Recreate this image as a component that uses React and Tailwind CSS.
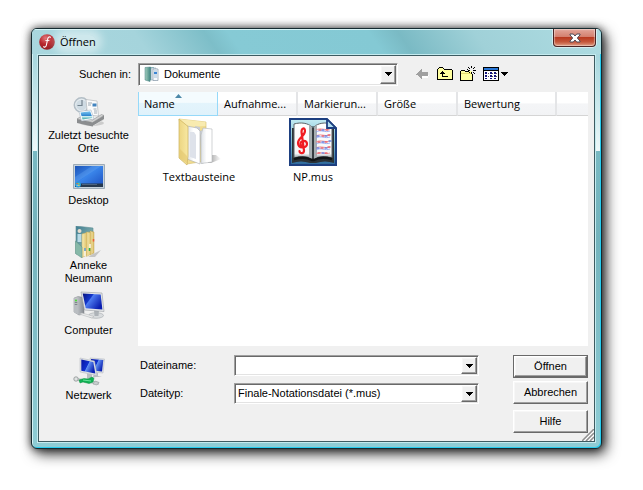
import { useState } from "react";

const SUNKEN =
  "border border-t-[#a0a0a0] border-l-[#a0a0a0] border-r-white border-b-white shadow-[inset_1px_1px_#696969,inset_-1px_-1px_#e3e3e3] bg-white";
const RAISED =
  "border border-t-white border-l-white border-r-[#696969] border-b-[#696969] shadow-[inset_-1px_-1px_#a0a0a0,inset_1px_1px_#f7f7f7] bg-[#f0f0f0]";

const FinaleLogo = () => (
  <svg viewBox="0 0 16 16" className="h-4 w-4">
    <defs>
      <radialGradient id="logo" cx="0.4" cy="0.25" r="0.8">
        <stop offset="0" stopColor="#e0767a" />
        <stop offset="0.5" stopColor="#b8262c" />
        <stop offset="1" stopColor="#8d1c21" />
      </radialGradient>
    </defs>
    <circle cx="8" cy="8" r="7.8" fill="url(#logo)" />
    <path d="M11.500 3.200C10 2.200 9 3.300 8.600 5.400L7.400 11c-.4 1.900-1.400 2.600-2.700 1.700" fill="none" stroke="#fff" strokeWidth="1.100" strokeLinecap="round" />
    <path d="M6.400 6.500h4" stroke="#fff" strokeWidth=".9" />
  </svg>
);

const DocsIcon = () => (
  <svg viewBox="0 0 16 16" className="h-4 w-4">
    <defs>
      <linearGradient id="docs" x1="0" x2="1">
        <stop offset="0" stopColor="#a5cfbf" />
        <stop offset="1" stopColor="#3f8580" />
      </linearGradient>
    </defs>
    <path d="M5 1h5v13H5z" fill="#8fb9bd" />
    <path d="M7 2h5v12H7z" fill="#dfe9f1" stroke="#8ca2b4" strokeWidth=".6" />
    <path d="M9 3h5v11.500H9z" fill="#f6fafd" stroke="#8798a8" strokeWidth=".7" />
    <path d="M10 5h3M10 9h3M10 11h3" stroke="#8eaccb" strokeWidth=".8" />
    <path d="M10 6h3v2h-3z" fill="#3d86d4" />
    <path d="M1 1.500 6.500 1v12l-.5 2.500L1 14z" fill="url(#docs)" stroke="#467f80" strokeWidth=".5" />
  </svg>
);

const RecentIcon = () => (
  <svg viewBox="0 0 32 32" className="h-8 w-8">
    <defs>
      <linearGradient id="recentPic" x1="0" y1="0" x2="0" y2="1">
        <stop offset="0" stopColor="#7cc8f2" />
        <stop offset=".55" stopColor="#2b83cf" />
        <stop offset=".6" stopColor="#d8f3f4" />
        <stop offset="1" stopColor="#2e9ea2" />
      </linearGradient>
    </defs>
    <ellipse cx="19" cy="27" rx="12" ry="3" fill="#000" opacity=".15" />
    <circle cx="8.500" cy="9" r="7.200" fill="#e4ebef" stroke="#b3bec6" strokeWidth="1.500" />
    <circle cx="8.500" cy="9" r="5.300" fill="#cfdbe3" />
    <path d="M9 4v5.500H4.500" fill="none" stroke="#74838e" strokeWidth="1.200" />
    <path d="M13 3.500 24 5l1.500 15-11-1z" fill="#fbfbfb" stroke="#b3b8bc" strokeWidth=".7" />
    <path d="M15 7h4M15 9h3M20.500 13h3M21 15h3M21 17h3" stroke="#93a0ab" strokeWidth=".9" />
    <path d="M19.500 7.500h4v3h-4z" fill="#4284bf" />
    <path d="m4 23 15.500 3.500L31 19.500v4L19.500 30.500 4 27z" fill="#8b8d8f" />
    <path d="m4 23 3-2 12.500 3 9-5.500 2.500 1-11.500 7z" fill="#d2d3d3" stroke="#7c7e80" strokeWidth=".5" />
    <path d="M6 15.500 18 14l3 9-12.500 2z" fill="#fff" stroke="#9ab" strokeWidth=".5" />
    <path d="m7.500 16.500 9.700-1.200 2.300 6.700-10 1.500z" fill="url(#recentPic)" />
    <path d="m20 30 11-6.500" stroke="#e8e8e8" strokeWidth=".8" />
  </svg>
);

const DesktopIcon = () => (
  <svg viewBox="0 0 32 32" className="h-8 w-8">
    <defs>
      <linearGradient id="desk" x1="0" y1="0" x2="1" y2="1">
        <stop offset="0" stopColor="#1b52b6" />
        <stop offset=".45" stopColor="#3a85ea" />
        <stop offset="1" stopColor="#1c4fc0" />
      </linearGradient>
    </defs>
    <path d="M.5 3.500h31v24H.5z" fill="#c6d2dc" stroke="#9dabb7" />
    <path d="M2 5h28v21H2z" fill="url(#desk)" />
    <path d="M2 16 19 5h9L2 22z" fill="#7ab7f8" opacity=".25" />
    <path d="M2 22.500h28V26H2z" fill="#27394f" />
    <path d="M9 23.500h15" stroke="#576f89" strokeWidth=".8" />
    <circle cx="5" cy="23.500" r="3" fill="#2a9bd8" />
    <path d="M3.500 22h1.300v1.300H3.500z" fill="#f46b37" />
    <path d="M5.200 22h1.300v1.300H5.200z" fill="#8bd05a" />
    <path d="M3.500 23.800h1.300v1.200H3.500z" fill="#73d1ff" />
    <path d="M5.200 23.800h1.300v1.200H5.200z" fill="#ffd348" />
  </svg>
);

const UserFolderIcon = () => (
  <svg viewBox="0 0 32 32" className="h-8 w-8">
    <defs>
      <linearGradient id="userBack" x1="0" y1="0" x2="1" y2="1">
        <stop offset="0" stopColor="#3f7d93" />
        <stop offset="1" stopColor="#a3c8bb" />
      </linearGradient>
      <linearGradient id="userYellow" x1="0" x2="1">
        <stop offset="0" stopColor="#f8ecb4" />
        <stop offset="1" stopColor="#dcc069" />
      </linearGradient>
    </defs>
    <path d="m20 28 8-4-6 7h-7z" fill="#000" opacity=".18" />
    <path d="m3 0 17 2v25L3 28z" fill="url(#userBack)" stroke="#5d8d95" strokeWidth=".6" />
    <circle cx="6.500" cy="5" r="2" fill="#e7ddcf" />
    <path d="M4.500 8h4v8h-4z" fill="#b9dbe7" />
    <path d="m17 5 4 1v21l-4 2z" fill="url(#userYellow)" stroke="#b3923d" strokeWidth=".4" />
    <path d="m13.500 6 4.500.5V28l-4.500 2.500z" fill="url(#userYellow)" stroke="#c6aa58" strokeWidth=".5" />
    <path d="m9 8 5-1.500V29l-5 2.500z" fill="url(#userYellow)" stroke="#c6aa58" strokeWidth=".5" />
    <path d="m2.500 15 6.500 6v11l-6.500-4.500z" fill="#86b8a8" stroke="#5c9083" strokeWidth=".5" />
    <path d="M12 25v5M17 18v4" stroke="#fff" strokeWidth="1.300" />
    <path d="M16.500 22v3" stroke="#32b447" strokeWidth="1.500" />
    <path d="M12 22v3" stroke="#4f91dc" strokeWidth="1.300" />
    <path d="M20.500 13v2.500" stroke="#ee5b39" strokeWidth="1.500" />
  </svg>
);

const ComputerIcon = () => (
  <svg viewBox="0 0 32 32" className="h-8 w-8">
    <defs>
      <linearGradient id="pc" x1="0" y1="0" x2="1" y2=".6">
        <stop offset="0" stopColor="#06127e" />
        <stop offset=".4" stopColor="#1437cb" />
        <stop offset=".45" stopColor="#4d7bf0" />
        <stop offset="1" stopColor="#0a1eb0" />
      </linearGradient>
      <linearGradient id="tower" x1="0" x2="1">
        <stop offset="0" stopColor="#d9dcdf" />
        <stop offset="1" stopColor="#858a90" />
      </linearGradient>
    </defs>
    <path d="m1 7 4-1.500 6 1V23l-5 1-5-3z" fill="url(#tower)" stroke="#7d8389" strokeWidth=".5" />
    <path d="m1 7 4 1v15.500L1 21z" fill="#b9bdc1" />
    <path d="M1.800 11.500h2.500M1.800 13.500h2.500" stroke="#666d73" strokeWidth=".7" />
    <circle cx="3" cy="9.500" r="1.100" fill="#4fda38" />
    <ellipse cx="23" cy="24.500" rx="7.500" ry="2.800" fill="#d9dcde" stroke="#a4a9ad" strokeWidth=".6" />
    <path d="m21 19 5 .5-.5 5.500h-4z" fill="#aeb3b8" />
    <path d="m8 1 21 1 2 18.500L11.500 19z" fill="#e4e6e8" stroke="#999ea3" strokeWidth=".6" />
    <path d="m9.700 2.600 18 1 1.700 15-16.700-1.300z" fill="url(#pc)" />
    <path d="m6 23 13 4 2-1.500L9 22z" fill="#ececec" stroke="#adb0b3" strokeWidth=".5" />
  </svg>
);

const NetworkIcon = () => (
  <svg viewBox="0 0 32 32" className="h-8 w-8">
    <defs>
      <linearGradient id="net" x1="0" y1="0" x2="1" y2=".5">
        <stop offset="0" stopColor="#0715a0" />
        <stop offset=".5" stopColor="#1031cf" />
        <stop offset=".55" stopColor="#6291f2" />
        <stop offset="1" stopColor="#0d24b4" />
      </linearGradient>
    </defs>
    <path d="M21 17h4v3l4 1h-9z" fill="#b9bec2" />
    <path d="m17 2 14.500 1-1.500 14-11-1z" fill="#dde0e4" stroke="#b1b7bd" strokeWidth=".5" />
    <path d="m18 3 12.300 1-1.300 11.500-10-1z" fill="url(#net)" />
    <path d="m14 17 5 1v3l4 1-9 1z" fill="#b9bec2" />
    <path d="m7 2 14.500 3L24 19.500 7 16z" fill="#dde0e4" stroke="#b1b7bd" strokeWidth=".5" />
    <path d="m8.300 3.600 12 2.500 2 11.500-14-2.800z" fill="url(#net)" />
    <path d="m2 23 24 4.500" stroke="#c3c9ca" strokeWidth="3" />
    <circle cx="3" cy="23" r="2.200" fill="#dfe2e2" stroke="#8b9292" strokeWidth=".8" />
    <path d="m6 24 5-1.500 4 .5 4-2 2 1.500-1 3.500-4 1.500-6-1.500-3 1z" fill="#10b052" stroke="#0d9442" strokeWidth=".5" />
    <path d="m10 24 8 1" stroke="#69e29b" />
    <path d="m22 25 4 1.500-2 2.500-4-1z" fill="#c9cece" stroke="#8b9292" strokeWidth=".5" />
  </svg>
);

const FolderLarge = () => (
  <svg viewBox="0 0 48 48" className="h-12 w-12">
    <defs>
      <linearGradient id="flapFront" x1="0" x2="1">
        <stop offset="0" stopColor="#ecd581" />
        <stop offset="1" stopColor="#f8e8a2" />
      </linearGradient>
      <linearGradient id="sheet" x1="0" x2="1">
        <stop offset="0" stopColor="#dde1e6" />
        <stop offset=".5" stopColor="#fff" />
      </linearGradient>
      <linearGradient id="folderShade" x1="0" x2="1">
        <stop offset="0" stopColor="#000" stopOpacity=".4" />
        <stop offset="1" stopColor="#000" stopOpacity="0" />
      </linearGradient>
    </defs>
    <path d="m36 45 10-4-5-4h-8v8z" fill="url(#folderShade)" />
    <path d="m4 1 27 3v39l-19 3z" fill="#f0dc90" stroke="#d5bd6c" strokeWidth=".6" />
    <path d="m4.500 1 26 3v4L12 9z" fill="#f8ebb0" />
    <path d="m20 8 5 1v36l-5-3z" fill="#c9cdd3" />
    <path d="m25 13 4-.5 3 2v29l-5 2z" fill="#d8dde5" stroke="#b5bbc4" strokeWidth=".5" />
    <path d="m28 10 9 1v33l-11 1.500V17z" fill="url(#sheet)" stroke="#b2b5b8" strokeWidth=".6" />
    <path d="M12 8 22 10l3 3v33l-13-5z" fill="url(#sheet)" stroke="#aaadb0" strokeWidth=".6" />
    <path d="M15 14h4l2 3v24l-6-2z" fill="#dee2ea" />
    <path d="m4 1 9 7.500V38l-1 9L4 40z" fill="url(#flapFront)" stroke="#cdb25c" strokeWidth=".7" />
    <path d="m5 31 7 7v7.500l-7-5.500z" fill="#dfc167" opacity=".5" />
  </svg>
);

const MusIcon = () => (
  <svg viewBox="0 0 48 48" className="h-12 w-12">
    <defs>
      <linearGradient id="musBg" x1="0" y1="0" x2="0" y2="1">
        <stop offset="0" stopColor="#c4edf4" />
        <stop offset=".6" stopColor="#69adc6" />
        <stop offset="1" stopColor="#2b6699" />
      </linearGradient>
      <linearGradient id="musPage" x1="0" y1="0" x2="0" y2="1">
        <stop offset="0" stopColor="#fff" />
        <stop offset=".85" stopColor="#f5f7f8" />
        <stop offset="1" stopColor="#7c8488" />
      </linearGradient>
    </defs>
    <path d="M1 1h37l9 9v37H1z" fill="url(#musBg)" stroke="#1d3f80" strokeWidth="2" />
    <path d="M3 10h42v35c-6-2-12-2-18 0h-6c-6-2-12-2-18 0z" fill="#2b3236" />
    <path d="M5 6c7-2 14-1 18 3v32c-5-3-11-3-18-1z" fill="url(#musPage)" stroke="#5c6468" />
    <path d="M43 6c-7-2-14-1-18 3v32c5-3 11-3 18-1z" fill="url(#musPage)" stroke="#5c6468" />
    <path d="m20 6.500 3 2.500v32l-3-1.500zM28 6.500 25 9v32l3-1.500z" fill="#a7aeb1" />
    <path d="M23.500 8h1v34h-1z" fill="#2b3034" />
    <path d="M5 41c7-2 13-2 18 1h2c5-3 11-3 18-1" fill="none" stroke="#111517" strokeWidth="2.500" />
    <path d="M10.500 33c0 3 4.500 3 4.500-.5L12.500 14c0-4 3.500-5 3.500-1 0 5-7 7-7 12 0 6 9 5.500 9 1 0-4-6.500-4-6.500-.5 0 2 2 2.500 2 2.500" fill="none" stroke="#f01c22" strokeWidth="2.200" strokeLinecap="round" />
    <g fill="none" strokeWidth="1" opacity=".75">
      <path d="M27 12c5-3 9 1 14-1M27 18c5-3 9 1 14-1M27 24c5-3 9 1 14-1M27 30c5-3 9 1 14-1M27 36c5-3 9 1 14-1" stroke="#ee7f86" />
      <path d="M27 14c5-3 9 1 14-1M27 20c5-3 9 1 14-1M27 26c5-3 9 1 14-1M27 32c5-3 9 1 14-1" stroke="#8197ee" />
    </g>
    <g strokeWidth="3" opacity=".6">
      <path d="M31 11v2M38 11v2M34 17v2M40 16v2M30 23v2M37 23v2M33 29v2M40 28v2M30 34v2M37 34v2" stroke="#ea4a55" />
      <path d="M34 11v2M29 17v2M37 17v2M34 23v2M41 22v2M29 29v2M37 29v2M34 34v2" stroke="#5070e0" />
    </g>
    <path d="M38 0h10v10z" fill="#fff" />
    <path d="M38 1v9h9z" fill="#b2dff1" stroke="#1d3f80" strokeWidth="1.800" />
  </svg>
);

const BackIcon = () => (
  <svg viewBox="0 0 16 16" className="h-4 w-4" shapeRendering="crispEdges">
    <path d="M15 7v3H8v3H7v-1h7z" fill="#fff" />
    <path d="M14 6H8V3H7v1H6v1H5v1H4v1H3v1H2v1h2v1h1v1h1v1h1v1h1V10h6z" fill="#a0a0a0" />
  </svg>
);

const UpIcon = () => (
  <svg viewBox="0 0 16 16" className="h-4 w-4" shapeRendering="crispEdges">
    <path d="M1 3h1V2h5v1h8v11H1z" fill="#ffffa0" />
    <path d="M2 1h4v1H2zM1 2h1v1H1zM6 2h1v1H6zM7 3h8v1H7zM0 3h1v10H0zM15 4h1v10h-1zM0 13h16v1H0z" />
    <path d="M5 5h1v1h1v1h1v1H6v2h5v1H5V8H3V7h1V6h1z" />
  </svg>
);

const NewFolderIcon = () => (
  <svg viewBox="0 0 16 16" className="h-4 w-4" shapeRendering="crispEdges">
    <path d="M1 5h11v9H1z" fill="#ffffa0" />
    <path d="M1 7h11v1H1z" fill="#e5dc70" />
    <path d="M1 4h4v1H1zM0 5h1v9H0zM5 5h4v1H5zM0 14h13v1H0zM12 8h1v6h-1z" />
    <path d="M11 0h1v2h-1zM11 6h1v2h-1zM7 3h1v1H7zM8 4h2v1H8zM13 4h3v1h-3zM9 2h1v1H9zM13 2h1v1h-1zM14 1h1v1h-1zM13 6h1v1h-1zM14 7h1v1h-1zM9 6h1v1H9zM8 1h1v1H8z" />
  </svg>
);

const ViewsIcon = () => (
  <svg viewBox="0 0 26 16" className="h-4 w-[26px]" shapeRendering="crispEdges">
    <path d="M0 1h16v14H0z" />
    <path d="M1 2h14v2H1z" fill="#2a78d8" />
    <path d="M1 5h14v9H1z" fill="#fff" />
    <path d="M2 6h2v2H2zM7 6h2v2H7zM11 6h2v2h-2zM2 9h2v2H2zM7 9h2v2H7zM11 9h2v2h-2zM2 12h2v1H2zM7 12h2v1H7zM11 12h2v1h-2z" fill="#15157c" />
    <path d="M5 7h1v1H5zM9 7h1v1H9zM13 7h1v1h-1zM5 10h1v1H5zM9 10h1v1H9zM13 10h1v1h-1z" fill="#555" />
    <path d="M18 6h7v1h-1v1h-1v1h-1v1h-1V9h-1V8h-1V7h-1z" />
  </svg>
);

const ArrowDown = () => (
  <svg viewBox="0 0 7 4" className="h-1 w-[7px]" shapeRendering="crispEdges">
    <path d="M0 0h7v1H6v1H5v1H4v1H3V3H2V2H1V1H0z" />
  </svg>
);

const CloseGlyph = () => (
  <svg viewBox="0 0 12 10" className="h-[10px] w-3">
    <path d="M1 1h3.300L6 3l1.700-2H11v1L8.300 5 11 8v1H7.700L6 7 4.300 9H1V8l2.700-3L1 2z" fill="#fff" stroke="#4d4a57" />
  </svg>
);

const places = [
  { label: "Zuletzt besuchte Orte", icon: <RecentIcon /> },
  { label: "Desktop", icon: <DesktopIcon /> },
  { label: "Anneke Neumann", icon: <UserFolderIcon /> },
  { label: "Computer", icon: <ComputerIcon /> },
  { label: "Netzwerk", icon: <NetworkIcon /> },
];

const columns = [
  { label: "Aufnahme...", width: "w-20" },
  { label: "Markierun...", width: "w-20" },
  { label: "Größe", width: "w-20" },
  { label: "Bewertung", width: "w-[99px]" },
];

const files = [
  { name: "Textbausteine", icon: <FolderLarge /> },
  { name: "NP.mus", icon: <MusIcon /> },
];

const tools = [
  { label: "Zurück", icon: <BackIcon /> },
  { label: "Aufwärts", icon: <UpIcon /> },
  { label: "Neuer Ordner", icon: <NewFolderIcon /> },
  { label: "Ansichten", icon: <ViewsIcon /> },
];

const SelectBox = ({ id, value, icon, className }) => (
  <div className={`relative ${SUNKEN} ${className}`}>
    {icon && <span className="pointer-events-none absolute left-[5px] top-[2px]">{icon}</span>}
    <select
      id={id}
      defaultValue={value}
      className={`block h-full w-full appearance-none bg-transparent pr-5 outline-none ${icon ? "pl-[25px]" : "pl-[3px]"}`}
    >
      <option>{value}</option>
    </select>
    <span
      className={`pointer-events-none absolute inset-y-px right-px flex w-4 items-center justify-center ${RAISED}`}
    >
      <ArrowDown />
    </span>
  </div>
);

const PushButton = ({ children, className = "", ...rest }) => (
  <button className={`h-[23px] w-full ${RAISED} ${className}`} {...rest}>
    {children}
  </button>
);

const App = () => {
  const [fileName, setFileName] = useState("");

  return (
    <main className="min-h-screen bg-white pt-7 pr-[41px] pb-10 pl-[31px] font-['Liberation_Sans',Arial,sans-serif] text-[11px] leading-[13px] text-black">
      <section className="overflow-hidden rounded-[6px] border border-[#152b30] bg-[#7bbcc5] bg-[linear-gradient(to_bottom,#a9d8df_0,#a9d8df_30px,#eef8f9_122px,transparent_122px),linear-gradient(to_bottom,#80c2cb,#74b3bc_50%,#8fcdd5)] shadow-[0_0_8px_rgba(0,0,0,0.7),4px_5px_14px_rgba(0,0,0,0.75),inset_-1px_-1px_#27cdf0,inset_1px_1px_#d5f3f6]">
        {/* Title bar */}
        <header className="flex h-[25px] justify-between bg-[linear-gradient(55deg,#a9d7de_0,#a5d4dc_20%,#7dbec8_32%,#86cad5_36%,#84c9d4_60%,#7abac4_65%,#a0d1d8_78%,#aedce2_100%)] pr-[5px] pl-[7px] shadow-[inset_0_1px_#d5f3f6]">
          <div className="flex items-center gap-[5px]">
            <FinaleLogo />
            <h1 className="rounded-full bg-white/45 font-['Open_Sans',sans-serif] text-[11px] shadow-[0_0_8px_6px_rgba(255,255,255,0.45)]">
              Öffnen
            </h1>
          </div>
          <button
            aria-label="Schließen"
            className="flex h-[18px] w-[43px] items-center justify-center rounded-b-[4px] border border-t-0 border-[#4b2524] bg-[linear-gradient(#e3a79b_0,#d4806f_45%,#b93a20_50%,#c4563a_75%,#df9a80_100%)] shadow-[0_0_0_1px_rgba(255,255,255,0.5),inset_0_0_1px_1px_rgba(255,255,255,0.4)]"
          >
            <CloseGlyph />
          </button>
        </header>

        <div className="mx-[5px] mb-[5px] border border-[#c5ebef]">
          <div className="relative border border-[#3d5b61] bg-[#f0f0f0]">
            {/* Look-in row */}
            <div className="flex h-9 items-center">
              <label htmlFor="folder" className="w-[99px] shrink-0 pr-[7px] text-right">
                Suchen in:
              </label>
              <SelectBox id="folder" value="Dokumente" icon={<DocsIcon />} className="h-[23px] w-[260px]" />
              <div className="ml-4 flex items-center gap-[7px]">
                {tools.map((tool) => (
                  <button key={tool.label} aria-label={tool.label}>
                    {tool.icon}
                  </button>
                ))}
              </div>
            </div>

            <div className="flex pr-[6px]">
              {/* Places */}
              <nav className="w-[99px] shrink-0 pt-1 pb-5">
                {places.map((place) => (
                  <a key={place.label} href="#" className="flex h-[65px] flex-col items-center gap-px px-2 text-center">
                    {place.icon}
                    <span>{place.label}</span>
                  </a>
                ))}
              </nav>

              <div className="min-w-0 flex-1">
                {/* File list */}
                <div className="h-[254px] overflow-hidden bg-white font-['Open_Sans',sans-serif]">
                  <div className="flex h-6 bg-[linear-gradient(#fff_45%,#f4f5f7_50%,#f2f3f5)]">
                    <button className="relative w-20 border border-t-0 border-[#96d9f9] bg-[linear-gradient(#f4fbfe_45%,#e3f4fc_50%,#e0f2fb)] pl-[5px] text-left">
                      <svg viewBox="0 0 7 4" className="absolute top-[2px] left-9 h-1 w-[7px]">
                        <path d="M3.500 0 7 4H0z" fill="#4c88a8" />
                      </svg>
                      Name
                    </button>
                    {columns.map((col) => (
                      <button
                        key={col.label}
                        className={`${col.width} border-r-2 border-b border-r-[#e4e5e7] border-b-[#d5d5d5] pl-[6px] text-left whitespace-nowrap`}
                      >
                        {col.label}
                      </button>
                    ))}
                    <div className="flex-1 border-b border-[#d5d5d5]" />
                  </div>
                  <ul className="flex flex-wrap pt-[2px] pl-1">
                    {files.map((file) => (
                      <li key={file.name} className="flex w-[114px] flex-col items-center gap-1">
                        {file.icon}
                        <span>{file.name}</span>
                      </li>
                    ))}
                  </ul>
                </div>

                {/* File name, type and buttons */}
                <form className="flex gap-[34px] pt-[9px]" onSubmit={(e) => e.preventDefault()}>
                  <div className="flex flex-1 flex-col gap-[7px]">
                    <div className="flex h-[21px] items-center">
                      <label htmlFor="filename" className="w-24 shrink-0 pl-[2px]">
                        Dateiname:
                      </label>
                      <div className={`flex h-full min-w-0 flex-1 p-px ${SUNKEN}`}>
                        <input
                          id="filename"
                          value={fileName}
                          onChange={(e) => setFileName(e.target.value)}
                          className="min-w-0 flex-1 bg-transparent px-[2px] outline-none"
                        />
                        <button
                          type="button"
                          aria-label="Zuletzt verwendete Namen"
                          className={`flex w-4 items-center justify-center ${RAISED}`}
                        >
                          <ArrowDown />
                        </button>
                      </div>
                    </div>
                    <div className="flex h-[21px] items-center">
                      <label htmlFor="filetype" className="w-24 shrink-0 pl-[2px]">
                        Dateityp:
                      </label>
                      <SelectBox id="filetype" value="Finale-Notationsdatei (*.mus)" className="h-full min-w-0 flex-1" />
                    </div>
                  </div>
                  <div className="flex w-[75px] flex-col gap-[3px]">
                    <div className="border border-[#696969]">
                      <button className={`block h-[21px] w-full ${RAISED}`}>Öffnen</button>
                    </div>
                    <PushButton type="button">Abbrechen</PushButton>
                    <PushButton type="button" className="mt-[3px]">
                      Hilfe
                    </PushButton>
                  </div>
                </form>
              </div>
            </div>

            {/* Resize grip */}
            <svg viewBox="0 0 12 12" className="absolute right-0 bottom-0 h-3 w-3 cursor-nwse-resize">
              <path d="M0 12 12 0M4 12l8-8M8 12l4-4" stroke="#8f8f8f" strokeWidth="1.500" />
              <path d="m2 12 10-10M6 12l6-6M10 12l2-2" stroke="#fff" />
            </svg>
          </div>
        </div>
      </section>
    </main>
  );
};

export default App;
